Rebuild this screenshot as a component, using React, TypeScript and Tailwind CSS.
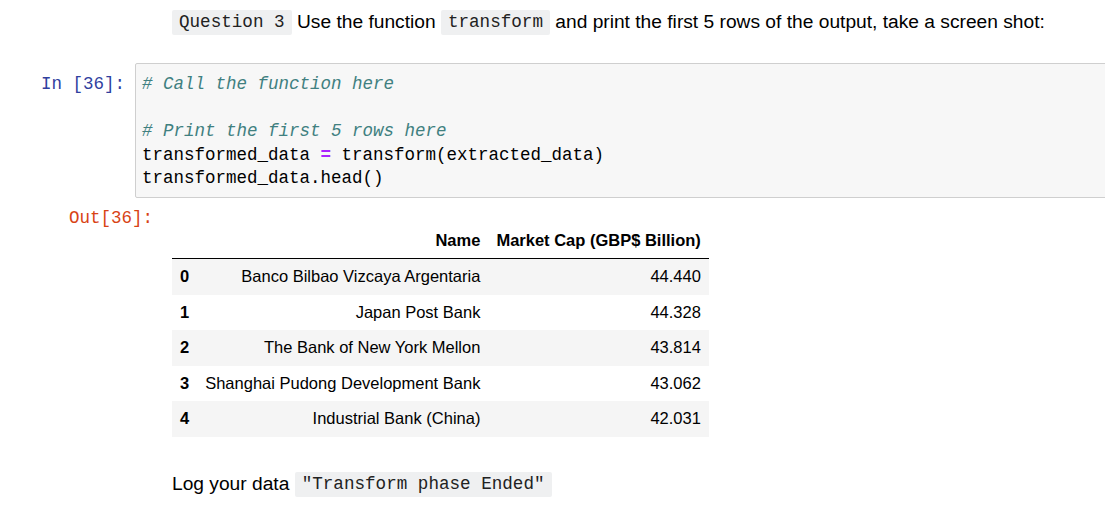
import React from "react";

const mono = "font-['Liberation_Mono','DejaVu_Sans_Mono',monospace]";
const sans = "font-['Liberation_Sans',Arial,sans-serif]";

function IC({ children }: { children: React.ReactNode }) {
  return (
    <code
      className={`${mono} inline-block text-[17.6px] leading-[23px] py-[1px] px-[7px] rounded-[2px] bg-[#eff0f1] text-[#222] align-middle`}
    >
      {children}
    </code>
  );
}

const rows = [
  ["0", "Banco Bilbao Vizcaya Argentaria", "44.440"],
  ["1", "Japan Post Bank", "44.328"],
  ["2", "The Bank of New York Mellon", "43.814"],
  ["3", "Shanghai Pudong Development Bank", "43.062"],
  ["4", "Industrial Bank (China)", "42.031"],
];

export default function App() {
  return (
    <div className={`w-[1105px] h-[508px] bg-white overflow-hidden text-black ${sans}`}>
      {/* Markdown line */}
      <p className="pl-[172px] pt-[9px] text-[19.2px] leading-[25px] whitespace-nowrap">
        <IC>Question 3</IC> Use the function <IC>transform</IC> and print the first 5 rows of the output, take a screen shot:
      </p>

      {/* Code cell */}
      <div className="flex mt-[28px]">
        <div
          className={`${mono} w-[135px] shrink-0 pr-[10px] pt-[10px] text-right text-[17.5px] leading-[23.5px] text-[#303F9F]`}
        >
          In&nbsp;[36]:
        </div>
        <div
          className={`${mono} w-[990px] shrink-0 border border-[#cfcfcf] rounded-[2px] bg-[#f7f7f7] pl-[6px] pt-[9px] pb-[6px] text-[17.5px] leading-[23.5px] whitespace-pre`}
        >
          <div className="italic text-[#408080]"># Call the function here</div>
          <div>&nbsp;</div>
          <div className="italic text-[#408080]"># Print the first 5 rows here</div>
          <div>
            transformed_data <span className="text-[#AA22FF] font-bold">=</span> transform(extracted_data)
          </div>
          <div>transformed_data.head()</div>
        </div>
      </div>

      {/* Output */}
      <div className="flex mt-[8px]">
        <div
          className={`${mono} w-[163px] shrink-0 pr-[10px] pt-[1px] text-right text-[17.5px] leading-[23.5px] text-[#D84315]`}
        >
          Out[36]:
        </div>
        <div className="pl-[9px] pt-[17px]">
          <table className="border-collapse text-[16.5px] leading-[19.5px] text-black">
            <thead>
              <tr className="border-b border-black">
                <th className="px-[8px] py-[8px]"></th>
                <th className="px-[8px] py-[8px] text-right font-bold">Name</th>
                <th className="px-[8px] py-[8px] text-right font-bold whitespace-nowrap">Market Cap (GBP$ Billion)</th>
              </tr>
            </thead>
            <tbody>
              {rows.map((r, i) => (
                <tr key={r[0]} className={i % 2 === 0 ? "bg-[#f5f5f5]" : "bg-white"}>
                  <th className="px-[8px] py-[8px] text-left font-bold">{r[0]}</th>
                  <td className="px-[8px] py-[8px] text-right whitespace-nowrap">{r[1]}</td>
                  <td className="px-[8px] py-[8px] text-right">{r[2]}</td>
                </tr>
              ))}
            </tbody>
          </table>
        </div>
      </div>

      {/* Markdown bottom */}
      <p className="pl-[172px] mt-[34px] text-[19.2px] leading-[25px] whitespace-nowrap">
        Log your data <IC>"Transform phase Ended"</IC>
      </p>
    </div>
  );
}
